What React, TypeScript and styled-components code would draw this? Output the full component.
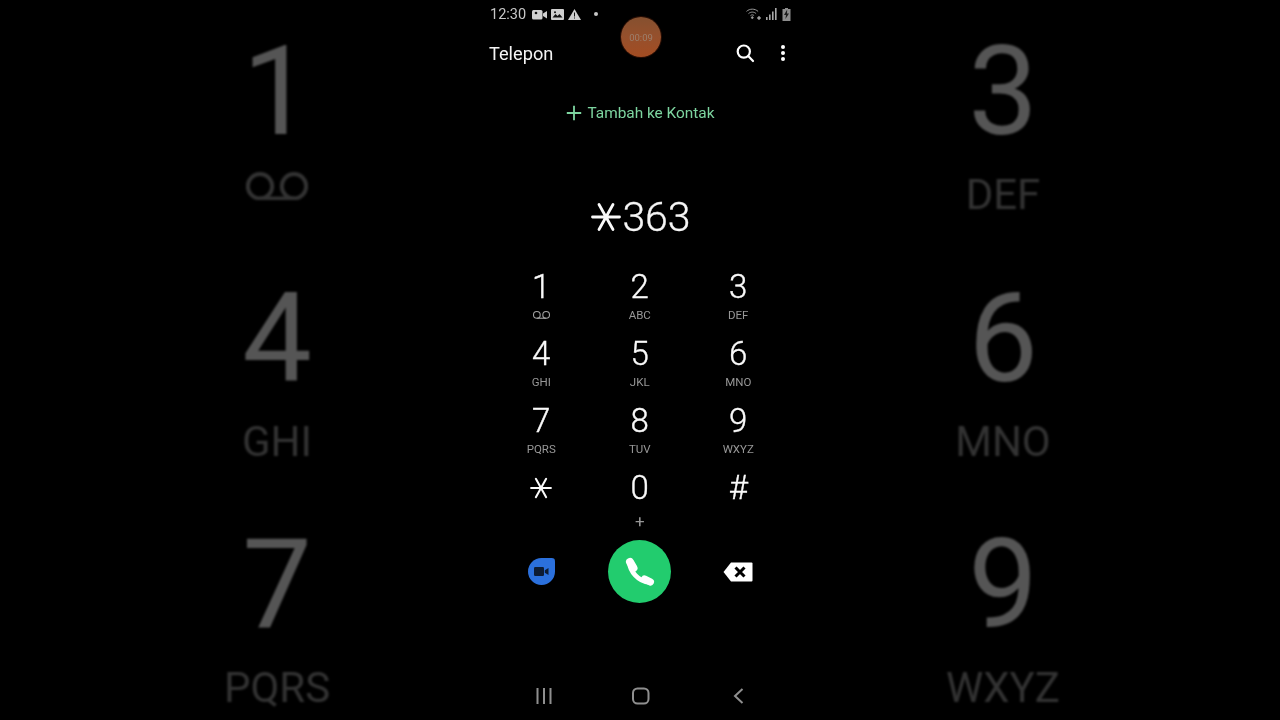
import React from "react";
import styled, { createGlobalStyle } from "styled-components";

const Global = createGlobalStyle`
  html, body { margin: 0; padding: 0; background: #000; overflow: hidden; }
  body { font-family: Roboto, "Liberation Sans", sans-serif; }
`;

const Page = styled.div`
  display: flex;
  width: 1280px;
  height: 720px;
  background: #000;
  overflow: hidden;
`;

const Side = styled.div<{ $inset: number }>`
  width: 480px;
  height: 720px;
  padding-left: ${(p) => p.$inset}px;
  box-sizing: border-box;
  filter: blur(0.8px);
  overflow: hidden;
`;

const SideKey = styled.div`
  width: 200px;
  height: 246.500px;
  display: flex;
  flex-direction: column;
  align-items: center;
  padding-top: 24px;
  box-sizing: border-box;
`;

const SideDigit = styled.div`
  height: 136px;
  line-height: 136px;
  font-size: 124px;
  font-weight: 400;
  color: #555;
`;

const SideLabel = styled.div<{ $icon?: boolean }>`
  height: 46px;
  line-height: 46px;
  margin-top: ${(p) => (p.$icon ? 3 : 12)}px;
  font-size: 42px;
  color: #333;
  display: flex;
  align-items: center;
`;

const Phone = styled.div`
  position: relative;
  width: 320px;
  height: 720px;
  display: flex;
  flex-direction: column;
  flex: none;
  filter: blur(0.35px);
`;

const StatusBar = styled.div`
  height: 28px;
  padding: 0 9px 0 10px;
  display: flex;
  align-items: center;
  color: #c6c6c6;
  font-size: 14.500px;
`;

const StatusLeft = styled.div`
  display: flex;
  align-items: center;
  gap: 4px;
  flex: 1;
`;

const Clock = styled.span`
  margin-right: 2px;
`;

const Dot = styled.span`
  width: 4px;
  height: 4px;
  margin-left: 9px;
  border-radius: 50%;
  background: #c6c6c6;
`;

const StatusRight = styled.div`
  display: flex;
  align-items: center;
  gap: 5px;
`;

const Header = styled.div`
  height: 50px;
  padding: 0 9px;
  display: flex;
  align-items: center;
  color: #f4f4f4;
  font-size: 18.200px;
`;

const Title = styled.div`
  flex: 1;
`;

const HeaderIcons = styled.div`
  display: flex;
  align-items: center;
  gap: 25px;
  padding-right: 5px;
`;

const Bubble = styled.div`
  position: absolute;
  left: 141px;
  top: 17px;
  width: 40px;
  height: 40px;
  border-radius: 50%;
  background: linear-gradient(180deg, #85502f 0%, #96502c 50%, #a34c22 100%);
  box-shadow: 0 0 0 1px #2a0e04;
  color: #9c7f6c;
  font-size: 9.500px;
  display: flex;
  align-items: center;
  justify-content: center;
`;

const AddRow = styled.div`
  height: 32px;
  margin-top: 19px;
  padding-left: 1px;
  display: flex;
  align-items: center;
  justify-content: center;
  gap: 5px;
  color: #7dd5a0;
  font-size: 15.400px;
`;

const NumberRow = styled.div`
  height: 50px;
  margin-top: 63px;
  padding-left: 2px;
  display: flex;
  align-items: center;
  justify-content: center;
  gap: 1px;
  color: #f6f6f6;
  font-size: 41px;
  font-weight: 300;
  -webkit-text-stroke: 0.3px #f6f6f6;
`;

const Pad = styled.div`
  margin-top: 28px;
  width: 296px;
  margin-left: 12px;
  display: grid;
  grid-template-columns: repeat(3, 98.500px);
  grid-auto-rows: 67px;
  justify-items: center;
`;

const Key = styled.div`
  display: flex;
  flex-direction: column;
  align-items: center;
  width: 90px;
`;

const Digit = styled.div`
  height: 34px;
  line-height: 34px;
  font-size: 33px;
  font-weight: 300;
  -webkit-text-stroke: 0.35px #fafafa;
  color: #fafafa;
  display: flex;
  align-items: center;
`;

const SubLabel = styled.div<{ $plus?: boolean }>`
  height: 14px;
  line-height: 14px;
  margin-top: ${(p) => (p.$plus ? 9 : 4)}px;
  font-size: ${(p) => (p.$plus ? 17 : 11.500)}px;
  color: #979797;
  display: flex;
  align-items: center;
`;

const Actions = styled.div`
  margin-top: 2px;
  width: 296px;
  margin-left: 12px;
  height: 63px;
  display: grid;
  grid-template-columns: repeat(3, 98.500px);
  justify-items: center;
  align-items: center;
`;

const VideoBtn = styled.div`
  width: 27px;
  height: 27px;
  border-radius: 50% 12% 50% 50%;
  background: #2b70dc;
  display: flex;
  align-items: center;
  justify-content: center;
`;

const CallBtn = styled.div`
  width: 63px;
  height: 63px;
  border-radius: 50%;
  background: #22cc6e;
  display: flex;
  align-items: center;
  justify-content: center;
`;

const NavBar = styled.div`
  margin-top: 78px;
  width: 296px;
  margin-left: 12px;
  height: 30px;
  display: grid;
  grid-template-columns: repeat(3, 98.500px);
  justify-items: center;
  align-items: center;
`;

const Search = () => (
  <svg width="20" height="20" viewBox="0 0 20 20" fill="none" stroke="#fff" strokeWidth="2.200">
    <circle cx="8.800" cy="8.600" r="6.100" />
    <path d="M13.200 13.100 18 18" strokeLinecap="round" />
  </svg>
);

const Dots = () => (
  <svg width="6" height="18" viewBox="0 0 6 18" fill="#fff">
    <circle cx="3" cy="3" r="2" />
    <circle cx="3" cy="9" r="2" />
    <circle cx="3" cy="15" r="2" />
  </svg>
);

const Voicemail = ({ w, c, sw }: { w: number; c: string; sw: number }) => (
  <svg width={w} height={w * 0.46} viewBox="0 0 62 28.500" fill="none" stroke={c} strokeWidth={sw * (62 / w)}>
    <circle cx="14" cy="14.200" r="12.200" />
    <circle cx="48" cy="14.200" r="12.200" />
    <path d="M14 26.400H48" />
  </svg>
);

const Star = ({ size, sw }: { size: number; sw: number }) => (
  <svg width={size} height={size} viewBox="0 0 30 30" stroke="#fafafa" strokeWidth={sw} strokeLinecap="round">
    <path d="M1.500 15H28.500M8 2.500 22 27.500M22 2.500 8 27.500" />
  </svg>
);

const Rec = () => (
  <svg width="15" height="11" viewBox="0 0 15 11" fill="#cfcfcf">
    <rect x="0" y="1" width="10.500" height="9.500" rx="1.500" />
    <path d="M11 4.500 15 2V9.500l-4-2.500z" />
    <circle cx="4" cy="4" r="1.300" fill="#111" />
  </svg>
);

const Pic = () => (
  <svg width="13" height="11" viewBox="0 0 13 11">
    <rect width="13" height="11" rx="1" fill="#cfcfcf" />
    <path d="M1.500 8.500 4.500 5l2 2 2-2 3 3.500z" fill="#111" />
    <circle cx="4" cy="3.200" r="1" fill="#111" />
  </svg>
);

const Warn = () => (
  <svg width="13" height="11" viewBox="0 0 13 11">
    <path d="M6.500 0 13 11H0z" fill="#cfcfcf" />
    <path d="M6 3.500h1V7.500H6zM6 8.400h1v1H6z" fill="#111" />
  </svg>
);

const Wifi = () => (
  <svg width="15" height="12" viewBox="0 0 15 12" fill="none" stroke="#9a9a9a" strokeWidth="1">
    <path d="M.5 3.400C3.800.4 8.800.4 12.100 3.400M2.500 5.600c2.200-2 5.400-2 7.600 0M4.500 7.600c1.100-1 2.500-1 3.600 0" />
    <circle cx="6.300" cy="9.600" r=".9" fill="#9a9a9a" />
    <path d="M11 10h4M13 8v4" stroke="#cfcfcf" />
  </svg>
);

const Signal = () => (
  <svg width="11" height="12" viewBox="0 0 11 12" fill="#a8a8a8">
    <rect x="0" y="9" width="1.600" height="3" />
    <rect x="3" y="6.500" width="1.600" height="5.500" />
    <rect x="6" y="3.500" width="1.600" height="8.500" />
    <rect x="9" y="0" width="1.600" height="12" />
  </svg>
);

const Battery = () => (
  <svg width="9" height="13" viewBox="0 0 9 13">
    <path d="M3 0h3v1h2.500v12H.5V1H3z" fill="#8d8d8d" />
    <path d="M5.200 1.500 2 7h2L3.400 11 7 5.500H5z" fill="#1e1e1e" />
  </svg>
);

const Plus = () => (
  <svg width="16" height="16" viewBox="0 0 16 16" stroke="#7dd5a0" strokeWidth="1.800">
    <path d="M8 .8V15.200M.8 8H15.200" />
  </svg>
);

const Handset = () => (
  <svg width="32" height="32" viewBox="0 0 32 32" fill="none" stroke="#fff" strokeLinecap="round">
    <path d="M5.500 7C6 15 14 25.500 25.500 26.500" strokeWidth="4.600" />
    <path d="M6 6 9.500 12" strokeWidth="8" />
    <path d="M20.500 23 26.500 26" strokeWidth="7" />
  </svg>
);

const Cam = () => (
  <svg width="15" height="11" viewBox="0 0 15 11" fill="#0d1c33">
    <rect x="0" y="1" width="10" height="9" rx="1.200" />
    <path d="M10.800 4.300 14.500 2V9l-3.700-2.300z" />
  </svg>
);

const Backspace = () => (
  <svg width="30" height="20" viewBox="0 0 30 20">
    <path d="M8 .5H28.500a1 1 0 0 1 1 1V18.500a1 1 0 0 1-1 1H8L.5 10z" fill="#fff" />
    <path d="M12.500 5.500 21.500 14.500M21.500 5.500 12.500 14.500" stroke="#000" strokeWidth="3" />
  </svg>
);

const Bars = () => (
  <svg width="22" height="16" viewBox="0 0 22 16" stroke="#8f8f8f" strokeWidth="2">
    <path d="M7.500 0V16M14 0V16M20.500 0V16" />
  </svg>
);

const Square = () => (
  <svg width="20" height="18" viewBox="0 0 20 18" fill="none" stroke="#8f8f8f" strokeWidth="2">
    <rect x="3" y="1.500" width="15.500" height="15" rx="4.500" />
  </svg>
);

const Chevron = () => (
  <svg width="11" height="16" viewBox="0 0 11 16" fill="none" stroke="#8f8f8f" strokeWidth="2">
    <path d="M9.500 1 2 8l7.500 7" />
  </svg>
);

const leftKeys = [
  { d: "1", l: <Voicemail w={62} c="#333" sw={4} />, icon: true },
  { d: "4", l: "GHI" },
  { d: "7", l: "PQRS" },
];
const rightKeys = [
  { d: "3", l: "DEF" },
  { d: "6", l: "MNO" },
  { d: "9", l: "WXYZ" },
];
const padKeys: { d: React.ReactNode; l?: React.ReactNode; plus?: boolean }[] = [
  { d: "1", l: <Voicemail w={17} c="#a0a0a0" sw={1.100} /> },
  { d: "2", l: "ABC" },
  { d: "3", l: "DEF" },
  { d: "4", l: "GHI" },
  { d: "5", l: "JKL" },
  { d: "6", l: "MNO" },
  { d: "7", l: "PQRS" },
  { d: "8", l: "TUV" },
  { d: "9", l: "WXYZ" },
  { d: <Star size={22} sw={2.800} /> },
  { d: "0", l: "+", plus: true },
  { d: "#" },
];

const SidePanel = ({ inset, keys }: { inset: number; keys: { d: string; l: React.ReactNode; icon?: boolean }[] }) => (
  <Side $inset={inset}>
    {keys.map((k) => (
      <SideKey key={k.d}>
        <SideDigit>{k.d}</SideDigit>
        <SideLabel $icon={k.icon}>{k.l}</SideLabel>
      </SideKey>
    ))}
  </Side>
);

export default function App() {
  return (
    <Page>
      <Global />
      <SidePanel inset={177} keys={leftKeys} />
      <Phone>
        <StatusBar>
          <StatusLeft>
            <Clock>12:30</Clock>
            <Rec />
            <Pic />
            <Warn />
            <Dot />
          </StatusLeft>
          <StatusRight>
            <Wifi />
            <Signal />
            <Battery />
          </StatusRight>
        </StatusBar>
        <Header>
          <Title>Telepon</Title>
          <HeaderIcons>
            <Search />
            <Dots />
          </HeaderIcons>
        </Header>
        <Bubble>00:09</Bubble>
        <AddRow>
          <Plus />
          Tambah ke Kontak
        </AddRow>
        <NumberRow>
          <Star size={30} sw={2.800} />
          363
        </NumberRow>
        <Pad>
          {padKeys.map((k, i) => (
            <Key key={i}>
              <Digit>{k.d}</Digit>
              {k.l && <SubLabel $plus={k.plus}>{k.l}</SubLabel>}
            </Key>
          ))}
        </Pad>
        <Actions>
          <VideoBtn>
            <Cam />
          </VideoBtn>
          <CallBtn>
            <Handset />
          </CallBtn>
          <Backspace />
        </Actions>
        <NavBar>
          <Bars />
          <Square />
          <Chevron />
        </NavBar>
      </Phone>
      <SidePanel inset={103} keys={rightKeys} />
    </Page>
  );
}
